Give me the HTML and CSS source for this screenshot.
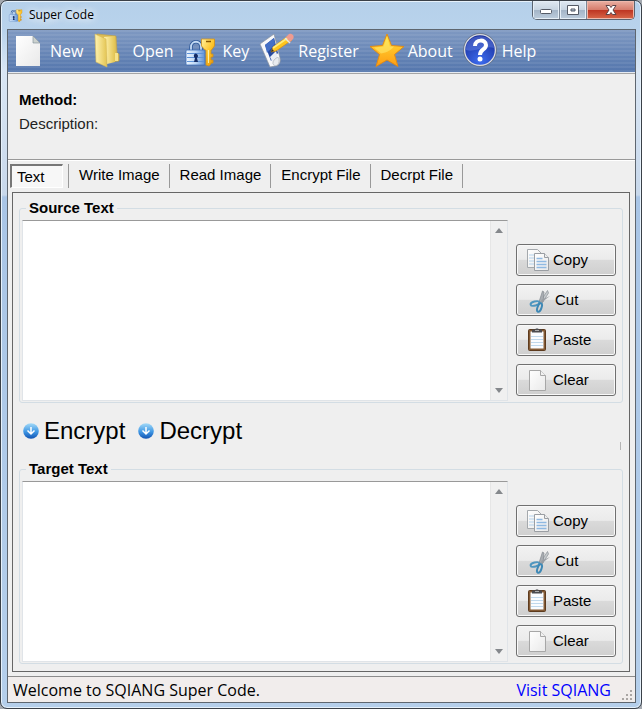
FILE: index.html
```html
<!DOCTYPE html>
<html lang="en">
<head>
    <meta charset="UTF-8">
    <meta name="viewport" content="width=device-width, initial-scale=1.0">
    <title>Super Code</title>
    <link rel="stylesheet" href="styles.css">
</head>
<body>
    <!-- Shared icons -->
    <svg class="defs" width="0" height="0" aria-hidden="true">
        <defs>
            <linearGradient id="paper" x1="0" y1="0" x2="1" y2="1">
                <stop offset="0" stop-color="#ffffff"/>
                <stop offset="1" stop-color="#e9e9e9"/>
            </linearGradient>
            <linearGradient id="gold" x1="0" y1="0" x2="1" y2="1">
                <stop offset="0" stop-color="#fff0a0"/>
                <stop offset="0.5" stop-color="#ffc72e"/>
                <stop offset="1" stop-color="#e08a00"/>
            </linearGradient>
            <linearGradient id="steel" x1="0" y1="0" x2="1" y2="0">
                <stop offset="0" stop-color="#eef5fd"/>
                <stop offset="0.5" stop-color="#bdd7f5"/>
                <stop offset="1" stop-color="#5c8fd4"/>
            </linearGradient>
            <linearGradient id="folder" x1="0" y1="0" x2="1" y2="0">
                <stop offset="0" stop-color="#fff3b0"/>
                <stop offset="1" stop-color="#e3c452"/>
            </linearGradient>
            <linearGradient id="star" x1="0" y1="0" x2="0" y2="1">
                <stop offset="0" stop-color="#ffe23a"/>
                <stop offset="1" stop-color="#ff9c12"/>
            </linearGradient>
            <radialGradient id="ball" cx="0.5" cy="0.85" r="0.8">
                <stop offset="0" stop-color="#3d6df0"/>
                <stop offset="1" stop-color="#1a2f9c"/>
            </radialGradient>
            <linearGradient id="drop" x1="0" y1="0" x2="0" y2="1">
                <stop offset="0" stop-color="#a5dbf8"/>
                <stop offset="0.55" stop-color="#3f97e4"/>
                <stop offset="1" stop-color="#1253b2"/>
            </linearGradient>
        </defs>
        <symbol id="icon-lock" viewBox="0 0 36 36">
            <path d="M8 18v-4c0-7 10-7 10 0v4" fill="none" stroke="#2f5a9a" stroke-width="3.500"/>
            <path d="M8 18v-4c0-7 10-7 10 0v4" fill="none" stroke="#c6dcf5" stroke-width="1.800"/>
            <rect x="3" y="17" width="19" height="15" rx="1" fill="url(#steel)" stroke="#3f70b8" stroke-width="0.800"/>
            <path d="M4 20.500h17M4 24.500h17M4 28.500h17" stroke="#5f93d8"/>
            <path d="M12.500 20.500a2.500 2.500 0 0 1 1.500 4.500l1 4h-4l1-4a2.500 2.500 0 0 1 .5-4.500z" fill="#152d66"/>
            <path d="M18.500 6h13v7l-3 4h-.5v4h2v3h-2v3h2v3h-2v1l-2 2-3-1V17h-1l-3.500-4z" fill="url(#gold)" stroke="#cf901a" stroke-width="0.800"/>
            <path d="M23 8.500h5" stroke="#8a5800" stroke-width="1.500"/>
            <path d="M25.500 17v13" stroke="#fff0a0"/>
        </symbol>
        <symbol id="icon-copy" viewBox="0 0 24 26">
            <path d="M1.500 2.500h10l4 4v14h-14z" fill="url(#paper)" stroke="#a5a9ad"/>
            <path d="M3 8h6M3 11h6M3 14h6M3 17h6" stroke="#b4d2ec"/>
            <path d="M8.500 6.500h10l4 4v13h-14z" fill="url(#paper)" stroke="#9a9ea3"/>
            <path d="M18.500 6.500v4h4" fill="#eee" stroke="#9a9ea3"/>
            <path d="M10.500 11.500h6M10.500 14.500h10M10.500 17.500h10M10.500 20.500h10" stroke="#8fb9e2" stroke-width="1.500"/>
        </symbol>
        <symbol id="icon-cut" viewBox="0 0 24 26">
            <path d="M14 15L21.500 3.500 22.500 6 15.500 17z" fill="#c6cacd" stroke="#8b9096" stroke-width="0.700"/>
            <path d="M13 15L16.500 4l1.500 1-1 10z" fill="#a9adb2" stroke="#84898f" stroke-width="0.700"/>
            <path d="M15 13l9-4-8 6z" fill="#9a9ea3"/>
            <ellipse cx="9" cy="16.500" rx="4.500" ry="2" transform="rotate(-15 9 16.500)" fill="none" stroke="#4f96bf" stroke-width="2"/>
            <ellipse cx="13.500" cy="20.500" rx="2" ry="4.500" transform="rotate(20 13.500 20.500)" fill="none" stroke="#3e88b5" stroke-width="2"/>
        </symbol>
        <symbol id="icon-paste" viewBox="0 0 24 26">
            <rect x="2.500" y="2.500" width="17" height="21" rx="1" fill="#835a35" stroke="#5d3b1e"/>
            <path d="M4.500 4.500h13v17h-13z" fill="#fafcff"/>
            <path d="M5 9.500h12M5 12.500h12M5 15.500h12M5 18.500h12" stroke="#c0d8ec"/>
            <path d="M6 5.500v-3h3l1-1h2l1 1h3v3z" fill="#4b4b4f"/>
            <path d="M9 3.500h4" stroke="#aaa"/>
        </symbol>
        <symbol id="icon-clear" viewBox="0 0 24 26">
            <path d="M3.500 3.500h11l5 5v15h-16z" fill="url(#paper)" stroke="#a7a7a7"/>
            <path d="M14.500 3.500v5h5" fill="#f1f1f1" stroke="#a7a7a7"/>
        </symbol>
        <symbol id="icon-down" viewBox="0 0 16 16">
            <circle cx="8" cy="8" r="7.800" fill="url(#drop)"/>
            <path d="M8 4v7M4.500 7.500L8 11l3.500-3.500" fill="none" stroke="#fff" stroke-width="1.500"/>
        </symbol>
    </svg>

    <div class="window">
        <header class="titlebar">
            <svg class="app-icon" viewBox="0 0 36 36" aria-hidden="true"><use href="#icon-lock"/></svg>
            <h1>Super Code</h1>
            <div class="controls">
                <button class="control" aria-label="Minimize">
                    <svg width="14" height="12" viewBox="0 0 14 12"><rect x="1.500" y="5.500" width="11" height="4" rx="1" fill="#fff" stroke="#555b66"/></svg>
                </button>
                <button class="control" aria-label="Maximize">
                    <svg width="14" height="12" viewBox="0 0 14 12"><path d="M1.500 1.500h11v9h-11zM5 5v2h4V5z" fill="#fff" fill-rule="evenodd" stroke="#555b66"/></svg>
                </button>
                <button class="control close" aria-label="Close">
                    <svg width="14" height="12" viewBox="0 0 14 12"><path d="M2 1.500h3.500L7 3.500l1.500-2H12L9 6l3 4.500H8.500L7 8.500l-1.500 2H2L5 6z" fill="#fff" stroke="#5d4347"/></svg>
                </button>
            </div>
        </header>

        <main class="client">
            <nav class="toolbar">
                <button class="tool">
                    <svg viewBox="0 0 36 36"><path d="M5 3h17l7 7v23H5z" fill="url(#paper)"/><path d="M22 3v7h7z" fill="#ccd2cf" stroke="#7b8a96" stroke-width="0.600"/></svg>
                    New
                </button>
                <button class="tool">
                    <svg viewBox="0 0 36 36"><path d="M4 1l19 2 1 17 2 1v7l-9 1z" fill="#dcbd57" stroke="#c3a13e" stroke-width="0.600"/><path d="M11 4l11-1v26l-8 2z" fill="url(#folder)"/><path d="M2 1l11 5 1 28-11-5z" fill="url(#folder)" stroke="#d8ba55" stroke-width="0.600"/><path d="M22 20h3v8h-3z" fill="#f7e38c"/></svg>
                    Open
                </button>
                <button class="tool">
                    <svg viewBox="0 0 36 36"><use href="#icon-lock"/></svg>
                    Key
                </button>
                <button class="tool">
                    <svg viewBox="0 0 36 36"><path d="M1 11L15 1l6 24c1 4-1 8-5 8l-5 1z" fill="#f7f8fa" stroke="#8d949e" stroke-width="0.700"/><path d="M6 12l9-7 4 15-7 8z" fill="#24499f"/><path d="M6 12l9-7 1 6-8 9z" fill="#446fc5"/><path d="M11 24l6-6 2 7-5 5z" fill="#e9edf4"/><path d="M14 31c-1-4 6-9 6-5 1 5-3 9-6 5z" fill="#e8ebef" stroke="#aab0b8" stroke-width="0.700"/><path d="M12 19l2-5L29 3l4 4-16 11z" fill="#ffc51d" stroke="#d68b12" stroke-width="0.700"/><path d="M14 15L30 4" stroke="#ffec7a" stroke-width="2"/><path d="M27 4l3-3c3-1 6 2 4 5l-3 3z" fill="#ef9b90"/><path d="M26 5l5 5" stroke="#e5e5e5" stroke-width="1.500"/><path d="M12 19l1-3 2 2z" fill="#333"/></svg>
                    Register
                </button>
                <button class="tool">
                    <svg viewBox="0 0 36 36"><path d="M18 1l4.500 11.500L35 13.500l-9.500 8 3.500 12L18 27 7 33.500l3.500-12L1 13.500l12.500-1z" fill="url(#star)" stroke="#e08b18"/><path d="M18 4l-3.500 9.500L5 14.500l7 6c6-1 11-4 13-7h-4z" fill="#fff27a" opacity="0.500"/></svg>
                    About
                </button>
                <button class="tool">
                    <svg viewBox="0 0 36 36"><circle cx="17" cy="17" r="15.500" fill="url(#ball)" stroke="#d7dae0" stroke-width="1.500"/><circle cx="17" cy="17" r="16.500" fill="none" stroke="#5b5f6b" stroke-width="0.600"/><path d="M3 17C2-1 31-1 31 15 22 12 12 20 3 17z" fill="#7f9af0" opacity="0.350"/><path d="M12 13c0-7 11-7 11-1 0 5-6 4-6 10" fill="none" stroke="#fff" stroke-width="4"/><circle cx="17" cy="26" r="2.500" fill="#fff"/></svg>
                    Help
                </button>
            </nav>

            <section class="info">
                <p class="method">Method:</p>
                <p>Description:</p>
            </section>

            <div class="tabs" role="tablist">
                <button class="tab active" role="tab" aria-selected="true">Text</button>
                <button class="tab" role="tab">Write Image</button>
                <button class="tab" role="tab">Read Image</button>
                <button class="tab" role="tab">Encrypt File</button>
                <button class="tab" role="tab">Decrpt File</button>
            </div>

            <section class="page">
                <fieldset class="group">
                    <legend><label for="source">Source Text</label></legend>
                    <div class="editor">
                        <textarea id="source"></textarea>
                        <div class="scrollbar" aria-hidden="true">
                            <svg width="8" height="5"><path d="M0 5l4-5 4 5z" fill="#85888c"/></svg>
                            <svg width="8" height="5"><path d="M0 0l4 5 4-5z" fill="#85888c"/></svg>
                        </div>
                    </div>
                    <div class="side">
                        <button class="btn"><svg viewBox="0 0 24 26"><use href="#icon-copy"/></svg>Copy</button>
                        <button class="btn cut"><svg viewBox="0 0 24 26"><use href="#icon-cut"/></svg>Cut</button>
                        <button class="btn"><svg viewBox="0 0 24 26"><use href="#icon-paste"/></svg>Paste</button>
                        <button class="btn"><svg viewBox="0 0 24 26"><use href="#icon-clear"/></svg>Clear</button>
                    </div>
                </fieldset>

                <div class="actions">
                    <button class="action"><svg viewBox="0 0 16 16"><use href="#icon-down"/></svg>Encrypt</button>
                    <button class="action"><svg viewBox="0 0 16 16"><use href="#icon-down"/></svg>Decrypt</button>
                    <span class="tick"></span>
                </div>

                <fieldset class="group">
                    <legend><label for="target">Target Text</label></legend>
                    <div class="editor">
                        <textarea id="target"></textarea>
                        <div class="scrollbar" aria-hidden="true">
                            <svg width="8" height="5"><path d="M0 5l4-5 4 5z" fill="#85888c"/></svg>
                            <svg width="8" height="5"><path d="M0 0l4 5 4-5z" fill="#85888c"/></svg>
                        </div>
                    </div>
                    <div class="side">
                        <button class="btn"><svg viewBox="0 0 24 26"><use href="#icon-copy"/></svg>Copy</button>
                        <button class="btn cut"><svg viewBox="0 0 24 26"><use href="#icon-cut"/></svg>Cut</button>
                        <button class="btn"><svg viewBox="0 0 24 26"><use href="#icon-paste"/></svg>Paste</button>
                        <button class="btn"><svg viewBox="0 0 24 26"><use href="#icon-clear"/></svg>Clear</button>
                    </div>
                </fieldset>
            </section>

            <footer class="status">
                <span>Welcome to SQIANG Super Code.</span>
                <a href="#">Visit SQIANG</a>
                <svg class="grip" width="12" height="12" viewBox="0 0 12 12"><path d="M9 0h2v2H9zM9 4h2v2H9zM9 8h2v2H9zM5 4h2v2H5zM5 8h2v2H5zM1 8h2v2H1z" fill="#aaa6a4"/></svg>
            </footer>
        </main>
    </div>
</body>
</html>
```

FILE: styles.css
```css
* {
    margin: 0;
    padding: 0;
    box-sizing: border-box;
}
body {
    background: #a4a9b0;
    font-family: "Liberation Sans", Arial, sans-serif;
    font-size: 15px;
    color: #000;
}
button {
    background: none;
    border: none;
    font: inherit;
    color: inherit;
}
.defs {
    position: absolute;
}

/* Window frame */
.window {
    display: flex;
    flex-direction: column;
    min-height: 100vh;
    padding: 0 5px 5px 6px;
    border: 1px solid #3a4048;
    border-radius: 7px;
    background: linear-gradient(#b5d0ea, #b9d3ec 30px, #d9e6f4 70px, #c8d8eb 194px, #a9c5e6 196px, #b5cfeb);
    box-shadow: inset 0 0 0 1px #e6f1fb;
}
.titlebar {
    display: flex;
    align-items: flex-start;
    height: 28px;
    padding-left: 1px;
}
.app-icon {
    width: 16px;
    height: 16px;
    margin-top: 6px;
}
.titlebar h1 {
    flex: 1;
    margin: 5px 0 0 5px;
    font: 12px/18px "Open Sans", sans-serif;
    text-shadow: 0 0 8px #fff, 0 0 8px #fff;
}
.controls {
    display: flex;
    margin-right: 1px;
    border: 1px solid #5b6470;
    border-top: none;
    border-radius: 0 0 5px 5px;
    overflow: hidden;
}
.control {
    display: flex;
    justify-content: center;
    align-items: center;
    width: 27px;
    height: 18px;
    border-right: 1px solid #7b8796;
    background: linear-gradient(#e0e9f2, #c8d5e2 48%, #a3b4c6 50%, #bdcddd);
    box-shadow: inset 0 0 0 1px #e5eef6;
}
.close {
    width: 47px;
    border-right: none;
    background: linear-gradient(#eab0a3, #d67d6c 48%, #bd3421 50%, #d8684a);
    box-shadow: inset 0 0 0 1px #eeb9ac;
}
.client {
    display: flex;
    flex-direction: column;
    flex: 1;
    border: 1px solid #5e666f;
    background: #efefef;
}

/* Toolbar */
.toolbar {
    display: flex;
    align-items: center;
    gap: 10px;
    height: 43px;
    padding-left: 3px;
    border-bottom: 1px solid #e6ebf2;
    background:
        repeating-linear-gradient(rgba(255, 255, 255, 0.07) 0 2px, transparent 2px 4px),
        linear-gradient(#7f99c2, #5476ad);
}
.tool {
    display: flex;
    align-items: center;
    gap: 3px;
    color: #fff;
    font: 16px/22px "Open Sans", sans-serif;
}
.tool svg {
    width: 36px;
    height: 36px;
}

/* Method and description */
.info {
    height: 87px;
    padding: 14px 11px 0;
    border-top: 1px solid #a5a5a5;
    border-bottom: 1px solid #999;
    line-height: 24px;
    color: #222;
}
.method {
    font-weight: bold;
    color: #000;
}

/* Tabs */
.tabs {
    display: flex;
    height: 32px;
    padding: 3px 2px 4px;
    border-top: 1px solid #fff;
}
.tab {
    padding: 0 9px 3px 10px;
    border-right: 1px solid #999;
}
.tab.active {
    width: 53px;
    padding: 0 0 1px 5px;
    border: 1px solid #fff;
    border-top: 2px solid #777;
    border-left: 2px solid #777;
    background: #f7f7f7;
    text-align: left;
}
.tab.active + .tab {
    margin-left: 5px;
    border-left: 1px solid #999;
}

/* Text page */
.page {
    display: flex;
    flex-direction: column;
    flex: 1;
    margin: 0 5px 4px 4px;
    padding: 7px 6px;
    border: 1px solid #666;
}
.group {
    display: flex;
    flex: 1;
    min-width: 0;
    padding: 4px 6px 0 2px;
    border: 1px solid #d3dde4;
    border-radius: 3px;
}
.group legend {
    margin-left: 4px;
    padding: 0 3px;
    font-weight: bold;
    line-height: 16px;
}
.editor {
    display: flex;
    flex: 1;
    border: 1px solid #e0e4e8;
    border-top-color: #999;
    background: #fff;
}
.editor textarea {
    flex: 1;
    min-width: 0;
    padding: 2px;
    border: none;
    outline: none;
    resize: none;
    background: #fff;
    font: inherit;
}
.scrollbar {
    display: flex;
    flex-direction: column;
    justify-content: space-between;
    align-items: center;
    width: 17px;
    padding: 7px 0;
    background: #f0f0f0;
    border-left: 1px solid #e6e6e6;
}
.side {
    display: flex;
    flex-direction: column;
    gap: 8px;
    width: 100px;
    margin-left: 8px;
    padding: 24px 0 5px;
}
.btn {
    display: flex;
    align-items: center;
    gap: 3px;
    height: 32px;
    padding: 0 0 1px 9px;
    border: 1px solid #707070;
    border-radius: 3px;
    background: linear-gradient(#f2f2f2, #ebebeb 48%, #dadada 50%, #cfcfcf);
    box-shadow: inset 0 0 0 1px #f9f9f9;
}
.btn svg {
    width: 24px;
    height: 26px;
}
.btn.cut {
    gap: 5px;
}

/* Encrypt and decrypt */
.actions {
    display: flex;
    align-items: center;
    gap: 13px;
    height: 58px;
    padding: 0 0 2px 4px;
}
.action {
    display: flex;
    align-items: center;
    gap: 5px;
    font-size: 24px;
    line-height: 28px;
}
.action svg {
    width: 16px;
    height: 16px;
}
.tick {
    width: 1px;
    height: 8px;
    margin: 30px 2px 0 auto;
    background: #b5b5b5;
}

/* Status bar */
.status {
    display: flex;
    align-items: center;
    height: 26px;
    padding: 0 2px 0 5px;
    border-top: 1px solid #8c8c8c;
    background: #f1edec;
    font: 16px/24px "Open Sans", sans-serif;
}
.status a {
    margin-left: auto;
    color: #00f;
    text-decoration: none;
}
.grip {
    align-self: flex-end;
    margin-left: 10px;
}
```
